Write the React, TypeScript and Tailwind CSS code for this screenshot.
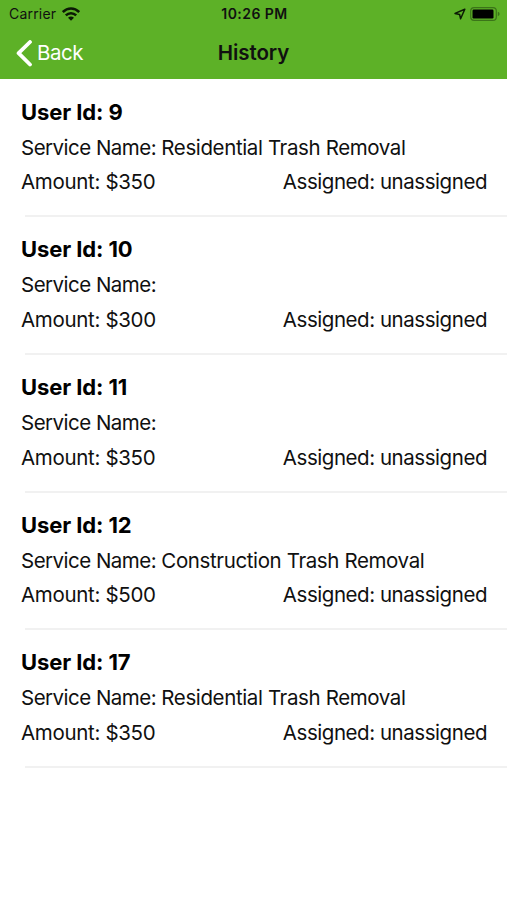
import React from 'react';

interface HistoryItem {
  userId: number;
  service: string;
  amount: number;
  assigned: string;
}

const HISTORY: HistoryItem[] = [
  { userId: 9, service: 'Residential Trash Removal', amount: 350, assigned: 'unassigned' },
  { userId: 10, service: '', amount: 300, assigned: 'unassigned' },
  { userId: 11, service: '', amount: 350, assigned: 'unassigned' },
  { userId: 12, service: 'Construction Trash Removal', amount: 500, assigned: 'unassigned' },
  { userId: 17, service: 'Residential Trash Removal', amount: 350, assigned: 'unassigned' },
];

const WifiIcon = () => (
  <svg width="18" height="14" viewBox="0 0 18 14" fill="none" stroke="#0b1a05" strokeWidth="2.5">
    <path d="M.8 5C5.5 .3 12.5 .3 17.2 5" />
    <path d="M3.8 8.4C6.7 5.5 11.3 5.5 14.2 8.4" />
    <path d="M9 13.8 6 10.8Q9 8.3 12 10.8Z" fill="#0b1a05" stroke="none" />
  </svg>
);

const LocationIcon = () => (
  <svg width="12" height="12" viewBox="0 0 12 12" fill="none" stroke="#0b1a05" strokeWidth="1.5" strokeLinejoin="round">
    <path d="M10.8 1.2 1 5.4 5.6 6.4 6.6 10.8Z" />
  </svg>
);

const BatteryIcon = () => (
  <svg width="30" height="14" viewBox="0 0 30 14" fill="none">
    <rect x=".7" y=".7" width="25.6" height="12.6" rx="3.4" stroke="#0b1a05" strokeWidth="1.2" strokeOpacity=".4" />
    <rect x="2.5" y="2.5" width="21" height="9" rx="1.2" fill="#000" />
    <path d="M27.8 4.8Q29.6 5.4 29.6 7T27.8 9.2Z" fill="#0b1a05" fillOpacity=".4" />
  </svg>
);

const HistoryRow: React.FC<{ item: HistoryItem }> = ({ item }) => (
  <li>
    <div className="h-[135.6px] pl-[21px] pr-5 pt-[14px]">
      <h2 className="h-[36px] text-[22px] leading-[36px] font-bold tracking-[-0.1px] text-black">User Id: {item.userId}</h2>
      <p className="h-[34.6px] text-[20.5px] leading-[36px] tracking-[-0.38px]">
        <span className="tracking-[-0.52px]">Service Name: </span>
        {item.service}
      </p>
      <div className="flex h-[35px] justify-between text-[20.5px] leading-[36px]">
        <span className="tracking-[-0.32px]">Amount: ${item.amount}</span>
        <span className="tracking-[-0.45px]">Assigned: {item.assigned}</span>
      </div>
    </div>
    <div className="ml-[25px] h-[2px] bg-[#f1f1f1]" />
  </li>
);

const App: React.FC = () => {
  return (
    <div className="h-[900px] w-[507px] overflow-hidden bg-white font-['Inter',sans-serif] text-[#101010]">
      <header className="h-[79px] bg-[#5db127]">
        <div className="grid h-[27px] grid-cols-3 items-center pl-[9px] pr-[7px] text-[14px]">
          <div className="flex items-center gap-[6px]">
            <span className="tracking-[0.2px]">Carrier</span>
            <WifiIcon />
          </div>
          <span className="text-center font-semibold tracking-[0.45px]">10:26 PM</span>
          <div className="flex items-center justify-end gap-[4px]">
            <LocationIcon />
            <BatteryIcon />
          </div>
        </div>
        <div className="grid h-[52px] grid-cols-3 items-center">
          <button className="flex items-center gap-[4px] pl-[16px] text-[20.5px] tracking-[-0.5px] text-white">
            <svg width="17" height="27" viewBox="0 0 17 27" fill="none" stroke="currentColor" strokeWidth="3.8" strokeLinecap="round" strokeLinejoin="round">
              <path d="M14 2 2.6 13.2 14 24.5" />
            </svg>
            Back
          </button>
          <h1 className="text-center text-[20.5px] font-semibold tracking-[-0.1px]">History</h1>
        </div>
      </header>

      <ul className="pt-[0.8px]">
        {HISTORY.map(item => (
          <HistoryRow key={item.userId} item={item} />
        ))}
      </ul>
    </div>
  );
};

export default App;
